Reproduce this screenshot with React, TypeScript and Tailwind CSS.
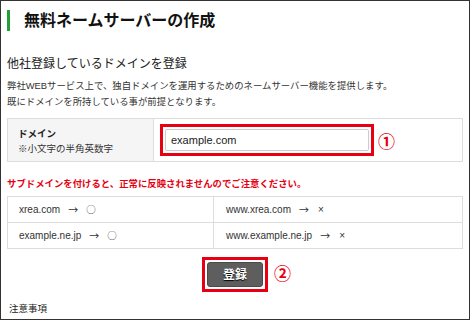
import React from "react";

const jp = { fontFamily: '"Liberation Sans", "Noto Sans CJK JP", sans-serif' };
const cjk = { fontFamily: '"Noto Sans CJK JP", sans-serif' };

function Cell({ name, ok }: { name: string; ok: boolean }) {
  return (
    <span className="flex items-center">
      <span>{name}</span>
      <span className="ml-[8px] text-[10px]" style={cjk}>→</span>
      <span className={ok ? "ml-[8px] text-[9.5px] text-[#444]" : "ml-[9px] text-[10px]"} style={ok ? cjk : jp}>
        {ok ? "○" : "×"}
      </span>
    </span>
  );
}

export default function App() {
  return (
    <div
      className="w-[470px] h-[320px] border border-[#333333] bg-white overflow-hidden text-[#222]"
      style={jp}
    >
      <div className="mt-[9px] ml-[6px] h-[21px] border-l-[3px] border-[#21a038] pl-[14px] flex items-center text-[16px] font-bold leading-none text-[#111]">
        無料ネームサーバーの作成
      </div>
      <div className="mt-[25px] ml-[6px] text-[12px] leading-[16px] text-[#222]">
        他社登録しているドメインを登録
      </div>
      <div className="mt-[6px] ml-[6px] text-[9.4px] leading-[16px] text-[#333]">
        <div>弊社WEBサービス上で、独自ドメインを運用するためのネームサーバー機能を提供します。</div>
        <div>既にドメインを所持している事が前提となります。</div>
      </div>
      <div className="mt-[8px] mx-[6px] h-[44px] border border-[#dddddd] flex">
        <div className="w-[146px] bg-[#f5f5f5] border-r border-[#dddddd] pl-[10px] flex flex-col justify-center">
          <div className="text-[9.5px] font-bold leading-[17px] text-[#222]">ドメイン</div>
          <div className="text-[9.5px] leading-[14px] text-[#333]">※小文字の半角英数字</div>
        </div>
        <div className="flex items-center pl-[6px]">
          <div className="w-[214px] h-[32px] border-[3px] border-[#e60012] p-[2px]">
            <div className="h-full w-full border border-[#cccccc] rounded-[2px] bg-white flex items-center pl-[5px] text-[11px] text-[#222]">
              example.com
            </div>
          </div>
          <span className="ml-[4px] text-[17px] leading-none font-bold text-[#e60012]" style={cjk}>①</span>
        </div>
      </div>
      <div className="mt-[15px] ml-[6px] text-[9.4px] leading-[14px] font-bold text-[#e60012]">
        サブドメインを付けると、正常に反映されませんのでご注意ください。
      </div>
      <div className="mt-[5px] mx-[6px] border border-[#dddddd] text-[10px] text-[#333]">
        <div className="flex h-[26px] border-b border-[#dddddd]">
          <div className="w-[206px] border-r border-[#dddddd] pl-[11px] flex items-center">
            <Cell name="xrea.com" ok />
          </div>
          <div className="flex-1 pl-[12px] flex items-center">
            <Cell name="www.xrea.com" ok={false} />
          </div>
        </div>
        <div className="flex h-[25px]">
          <div className="w-[206px] border-r border-[#dddddd] pl-[11px] flex items-center">
            <Cell name="example.ne.jp" ok />
          </div>
          <div className="flex-1 pl-[12px] flex items-center">
            <Cell name="www.example.ne.jp" ok={false} />
          </div>
        </div>
      </div>
      <div className="mt-[8px] flex justify-center">
        <div className="relative">
          <div className="w-[66px] h-[35px] border-[3px] border-[#e60012] p-[2px]">
            <div className="h-full w-full rounded-[3px] bg-[#5e5e5e] border border-[#4a4a4a] flex items-center justify-center text-white text-[12px] font-bold [text-shadow:0_1px_1px_#000]">
              登録
            </div>
          </div>
          <span className="absolute left-[72px] top-[7px] text-[17px] leading-none font-bold text-[#e60012]" style={cjk}>②</span>
        </div>
      </div>
      <div className="mt-[10px] ml-[8px] text-[9.5px] leading-[14px] text-[#222]">注意事項</div>
    </div>
  );
}
